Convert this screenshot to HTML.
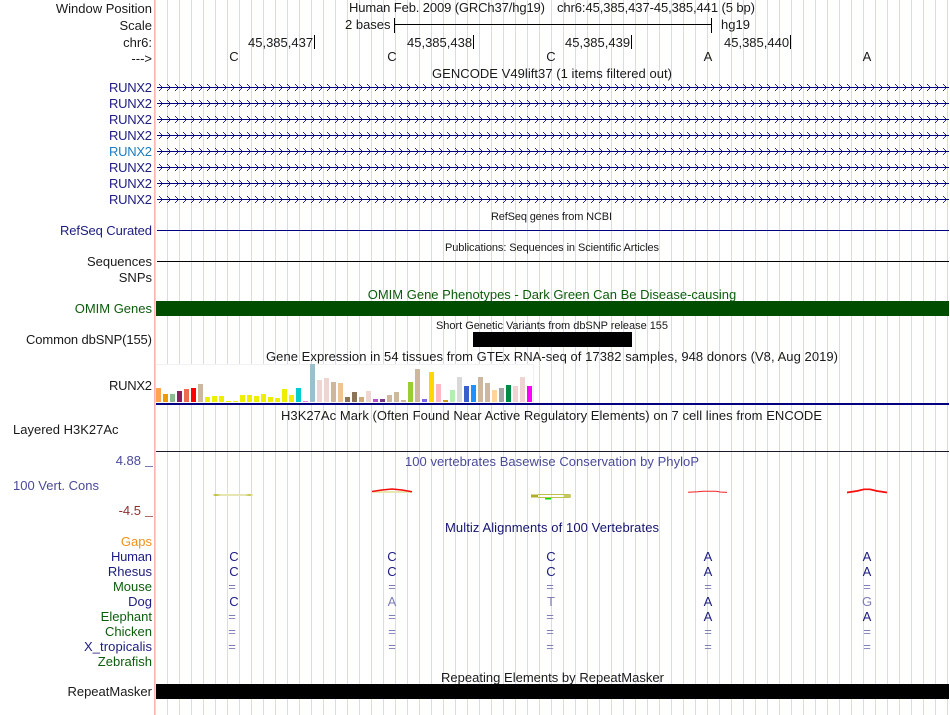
<!DOCTYPE html>
<html><head><meta charset="utf-8"><style>
html,body{margin:0;padding:0;background:#fff;width:950px;height:715px;overflow:hidden}
svg{display:block;position:absolute;left:0;top:0}
text{font-family:"Liberation Sans",sans-serif;font-size:13px;fill:#1a1a1a}
.e{text-anchor:end}.m{text-anchor:middle}
.n{fill:#1c1c80}.g{fill:#0c5c0c}.s{font-size:11px}
.c{fill:#4a4a9a}.l{fill:#7d7db8}
</style></head><body>
<svg width="950" height="715" viewBox="0 0 950 715" xmlns="http://www.w3.org/2000/svg">
<defs>
<pattern id="grid" x="167" y="0" width="12" height="10" patternUnits="userSpaceOnUse"><rect x="0" y="0" width="1" height="10" fill="#d9d9f4"/></pattern>
<pattern id="chev" x="157" y="84" width="8" height="16" patternUnits="userSpaceOnUse">
<g fill="#000080" fill-opacity=".85"><rect x="2" y="0" width="1" height="1"/><rect x="3" y="1" width="1" height="1"/><rect x="4" y="2" width="1" height="1"/><rect x="5" y="3" width="1" height="1"/><rect x="4" y="4" width="1" height="1"/><rect x="3" y="5" width="1" height="1"/><rect x="2" y="6" width="1" height="1"/></g>
</pattern>
<filter id="soft" x="-10%" y="-100%" width="120%" height="300%"><feGaussianBlur stdDeviation="0.35"/></filter>
<linearGradient id="yel" x1="0" x2="1" y1="0" y2="0"><stop offset="0" stop-color="#f0f0c8"/><stop offset=".06" stop-color="#bcbc30"/><stop offset=".2" stop-color="#e6e6b4"/><stop offset=".8" stop-color="#e6e6b4"/><stop offset=".92" stop-color="#c4c450"/><stop offset="1" stop-color="#f4f4d8"/></linearGradient>
</defs>
<rect x="155" y="0" width="795" height="715" fill="url(#grid)"/>
<rect x="154" y="0" width="1" height="715" fill="#ffb4b4"/>

<!-- header -->
<text x="152" y="13" class="e">Window Position</text>
<text x="152" y="30" class="e">Scale</text>
<text x="152" y="47" class="e">chr6:</text>
<text x="152" y="63" class="e">---&gt;</text>
<text x="349" y="12" textLength="196">Human Feb. 2009 (GRCh37/hg19)</text>
<text x="557" y="12" textLength="198">chr6:45,385,437-45,385,441 (5 bp)</text>
<text x="345" y="29">2 bases</text>
<text x="721" y="29">hg19</text>
<rect x="394" y="18" width="1" height="15" fill="#000"/><rect x="711" y="18" width="1" height="15" fill="#000"/>
<rect x="394" y="24" width="318" height="1" fill="#000"/>
<text x="248" y="47">45,385,437</text><rect x="314" y="35" width="1" height="14" fill="#000"/>
<text x="407" y="47">45,385,438</text><rect x="473" y="35" width="1" height="14" fill="#000"/>
<text x="565" y="47">45,385,439</text><rect x="631" y="35" width="1" height="14" fill="#000"/>
<text x="724" y="47">45,385,440</text><rect x="790" y="35" width="1" height="14" fill="#000"/>
<text x="234" y="61" class="m">C</text><text x="392" y="61" class="m">C</text><text x="551" y="61" class="m">C</text><text x="708" y="61" class="m">A</text><text x="867" y="61" class="m">A</text>
<text x="432" y="78" textLength="240">GENCODE V49lift37 (1 items filtered out)</text>

<!-- genes -->
<text x="152" y="92" class="e n" textLength="43">RUNX2</text><text x="152" y="108" class="e n" textLength="43">RUNX2</text><text x="152" y="124" class="e n" textLength="43">RUNX2</text><text x="152" y="140" class="e n" textLength="43">RUNX2</text>
<text x="152" y="156" class="e" textLength="43" style="fill:#1c7cc0">RUNX2</text><text x="152" y="172" class="e n" textLength="43">RUNX2</text><text x="152" y="188" class="e n" textLength="43">RUNX2</text><text x="152" y="204" class="e n" textLength="43">RUNX2</text>
<g fill="#000080">
<rect x="157" y="87" width="792" height="1"/><rect x="157" y="103" width="792" height="1"/><rect x="157" y="119" width="792" height="1"/><rect x="157" y="135" width="792" height="1"/><rect x="157" y="151" width="792" height="1"/><rect x="157" y="167" width="792" height="1"/><rect x="157" y="183" width="792" height="1"/><rect x="157" y="199" width="792" height="1"/>
</g>
<rect x="157" y="84" width="792" height="7" fill="url(#chev)"/><rect x="157" y="100" width="792" height="7" fill="url(#chev)"/><rect x="157" y="116" width="792" height="7" fill="url(#chev)"/><rect x="157" y="132" width="792" height="7" fill="url(#chev)"/><rect x="157" y="148" width="792" height="7" fill="url(#chev)"/><rect x="157" y="164" width="792" height="7" fill="url(#chev)"/><rect x="157" y="180" width="792" height="7" fill="url(#chev)"/><rect x="157" y="196" width="792" height="7" fill="url(#chev)"/>

<text x="491" y="220" class="s" textLength="121">RefSeq genes from NCBI</text>
<text x="152" y="235" class="e n" textLength="92">RefSeq Curated</text>
<rect x="157" y="230" width="792" height="1" fill="#000080"/>
<text x="445" y="251" class="s" textLength="214">Publications: Sequences in Scientific Articles</text>
<text x="152" y="266" class="e">Sequences</text>
<rect x="157" y="261" width="792" height="1" fill="#000"/>
<text x="152" y="282" class="e">SNPs</text>

<text x="552" y="299" class="m g">OMIM Gene Phenotypes - Dark Green Can Be Disease-causing</text>
<text x="152" y="313" class="e g">OMIM Genes</text>
<rect x="156" y="301" width="793" height="15" fill="#004d00"/>
<text x="436" y="329" class="s" textLength="232">Short Genetic Variants from dbSNP release 155</text>
<text x="152" y="344" class="e" textLength="126">Common dbSNP(155)</text>
<rect x="473" y="332" width="159" height="15" fill="#000"/>
<text x="266" y="361" textLength="572">Gene Expression in 54 tissues from GTEx RNA-seq of 17382 samples, 948 donors (V8, Aug 2019)</text>

<!-- GTEx -->
<text x="152" y="390" class="e" textLength="43">RUNX2</text>
<rect x="156" y="364" width="378" height="39" fill="#fff"/>
<rect x="156" y="364" width="378" height="1" fill="#f2f2f4"/>
<rect x="533" y="364" width="1" height="39" fill="#f0f0f4"/>
<g>
<rect x="156" y="388" width="5" height="14" fill="#FFA54F"/><rect x="163" y="394" width="5" height="8" fill="#EE9A00"/><rect x="170" y="394" width="5" height="8" fill="#8FBC8F"/><rect x="177" y="391" width="5" height="11" fill="#8B1C62"/><rect x="184" y="389" width="5" height="13" fill="#EE6A50"/><rect x="191" y="388" width="5" height="14" fill="#FF0000"/><rect x="198" y="384" width="5" height="18" fill="#CDB79E"/>
<rect x="205" y="397" width="5" height="5" fill="#EEEE00"/><rect x="212" y="396" width="5" height="6" fill="#EEEE00"/><rect x="219" y="396" width="5" height="6" fill="#EEEE00"/><rect x="226" y="401" width="5" height="1" fill="#EEEE00"/><rect x="233" y="401" width="5" height="1" fill="#EEEE00"/><rect x="240" y="395" width="5" height="7" fill="#EEEE00"/><rect x="247" y="395" width="5" height="7" fill="#EEEE00"/><rect x="254" y="396" width="5" height="6" fill="#EEEE00"/><rect x="261" y="394" width="5" height="8" fill="#EEEE00"/><rect x="268" y="397" width="5" height="5" fill="#EEEE00"/><rect x="275" y="398" width="5" height="4" fill="#EEEE00"/><rect x="282" y="389" width="5" height="13" fill="#EEEE00"/><rect x="289" y="395" width="5" height="7" fill="#EEEE00"/>
<rect x="296" y="388" width="5" height="14" fill="#00CDCD"/><rect x="303" y="401" width="5" height="1" fill="#EE82EE"/><rect x="310" y="364" width="5" height="38" fill="#9AC0CD"/><rect x="317" y="380" width="5" height="22" fill="#EED5D2"/><rect x="324" y="378" width="5" height="24" fill="#EED5D2"/><rect x="331" y="382" width="5" height="20" fill="#CDB79E"/><rect x="338" y="383" width="5" height="19" fill="#EEC591"/>
<rect x="345" y="397" width="5" height="5" fill="#8B7355"/><rect x="352" y="392" width="5" height="10" fill="#8B7355"/><rect x="359" y="397" width="5" height="5" fill="#CDAA7D"/><rect x="366" y="391" width="5" height="11" fill="#EED5D2"/><rect x="373" y="399" width="5" height="3" fill="#B452CD"/><rect x="380" y="399" width="5" height="3" fill="#7A378B"/><rect x="387" y="395" width="5" height="7" fill="#CDB79E"/><rect x="394" y="392" width="5" height="10" fill="#CDB79E"/><rect x="401" y="400" width="5" height="2" fill="#CDB79E"/><rect x="408" y="382" width="5" height="20" fill="#9ACD32"/><rect x="415" y="369" width="5" height="33" fill="#CDB79E"/><rect x="422" y="399" width="5" height="3" fill="#7A67EE"/><rect x="429" y="372" width="5" height="30" fill="#FFD700"/><rect x="436" y="384" width="5" height="18" fill="#FFB6C1"/><rect x="443" y="400" width="5" height="2" fill="#CD9B1D"/><rect x="450" y="390" width="5" height="12" fill="#B4EEB4"/><rect x="457" y="377" width="5" height="25" fill="#D9D9D9"/><rect x="464" y="386" width="5" height="16" fill="#3A5FCD"/><rect x="471" y="385" width="5" height="17" fill="#1E90FF"/><rect x="478" y="377" width="5" height="25" fill="#CDB79E"/><rect x="485" y="383" width="5" height="19" fill="#CDB79E"/><rect x="492" y="390" width="5" height="12" fill="#FFD39B"/><rect x="499" y="388" width="5" height="14" fill="#A6A6A6"/><rect x="506" y="385" width="5" height="17" fill="#008B45"/><rect x="513" y="386" width="5" height="16" fill="#EED5D2"/><rect x="520" y="377" width="5" height="25" fill="#EED5D2"/><rect x="527" y="386" width="5" height="16" fill="#FF00FF"/>
</g>
<rect x="156" y="403" width="793" height="2" fill="#000080"/>

<text x="281" y="420" textLength="541">H3K27Ac Mark (Often Found Near Active Regulatory Elements) on 7 cell lines from ENCODE</text>
<text x="13" y="434">Layered H3K27Ac</text>
<rect x="156" y="451" width="793" height="1" fill="#1a1a2a"/>

<!-- conservation -->
<text x="405" y="466" class="c" textLength="294">100 vertebrates Basewise Conservation by PhyloP</text>
<text x="141" y="465" class="e c">4.88</text><rect x="145" y="466" width="8" height="1" fill="#7a7ab4"/>
<text x="13" y="490" class="c">100 Vert. Cons</text>
<text x="141" y="515" class="e" style="fill:#8e3030">-4.5</text><rect x="145" y="516" width="8" height="1" fill="#b06a6a"/>

<g filter="url(#soft)">
<rect x="213" y="494" width="40" height="2" fill="url(#yel)"/>
<rect x="373" y="491" width="38" height="2" fill="#e8e8b0"/>
<path d="M372 491.500 L382 490 L392 489 L402 490 L412 491.800" fill="none" stroke="#f40808" stroke-width="1.500"/>
<rect x="538" y="494" width="32" height="1" fill="#c0c050"/>
<rect x="538" y="497" width="32" height="1" fill="#c0c050"/>
<rect x="531" y="494.500" width="7" height="3" fill="#b0b020"/>
<rect x="564" y="494.500" width="7" height="3" fill="#c8c860"/>
<rect x="545" y="498" width="6" height="1.500" fill="#00e000"/>
<path d="M688 492.300 L698 491.800 L703 491.200 L716 491.200 L720 492 L727 492.400" fill="none" stroke="#f42020" stroke-width="1"/>
<path d="M847 492.500 L857 491 L864 489.300 L870 489.300 L877 491 L887 492.500" fill="none" stroke="#f80808" stroke-width="1.700"/>
</g>

<text x="445" y="532" textLength="214" style="fill:#14146e">Multiz Alignments of 100 Vertebrates</text>

<text x="152" y="546" class="e" style="fill:#f0901e">Gaps</text>
<text x="152" y="561" class="e n" textLength="41">Human</text>
<text x="152" y="576" class="e n">Rhesus</text>
<text x="152" y="591" class="e g">Mouse</text>
<text x="152" y="606" class="e n">Dog</text>
<text x="152" y="621" class="e g">Elephant</text>
<text x="152" y="636" class="e g">Chicken</text>
<text x="152" y="651" class="e n" textLength="68">X_tropicalis</text>
<text x="152" y="666" class="e g">Zebrafish</text>

<text x="234" y="561" class="m n">C</text><text x="392" y="561" class="m n">C</text><text x="551" y="561" class="m n">C</text><text x="708" y="561" class="m n">A</text><text x="867" y="561" class="m n">A</text>
<text x="234" y="576" class="m n">C</text><text x="392" y="576" class="m n">C</text><text x="551" y="576" class="m n">C</text><text x="708" y="576" class="m n">A</text><text x="867" y="576" class="m n">A</text>
<text x="232" y="591" class="m l">=</text><text x="392" y="591" class="m l">=</text><text x="550" y="591" class="m l">=</text><text x="708" y="591" class="m l">=</text><text x="867" y="591" class="m l">=</text>
<text x="234" y="606" class="m n">C</text><text x="392" y="606" class="m l">A</text><text x="551" y="606" class="m l">T</text><text x="708" y="606" class="m n">A</text><text x="867" y="606" class="m l">G</text>
<text x="232" y="621" class="m l">=</text><text x="392" y="621" class="m l">=</text><text x="550" y="621" class="m l">=</text><text x="708" y="621" class="m n">A</text><text x="867" y="621" class="m n">A</text>
<text x="232" y="636" class="m l">=</text><text x="392" y="636" class="m l">=</text><text x="550" y="636" class="m l">=</text><text x="708" y="636" class="m l">=</text><text x="867" y="636" class="m l">=</text>
<text x="232" y="651" class="m l">=</text><text x="392" y="651" class="m l">=</text><text x="550" y="651" class="m l">=</text><text x="708" y="651" class="m l">=</text><text x="867" y="651" class="m l">=</text>

<text x="441" y="682" textLength="223">Repeating Elements by RepeatMasker</text>
<text x="152" y="696" class="e">RepeatMasker</text>
<rect x="156" y="684" width="793" height="15" fill="#000"/>
</svg>
</body></html>
